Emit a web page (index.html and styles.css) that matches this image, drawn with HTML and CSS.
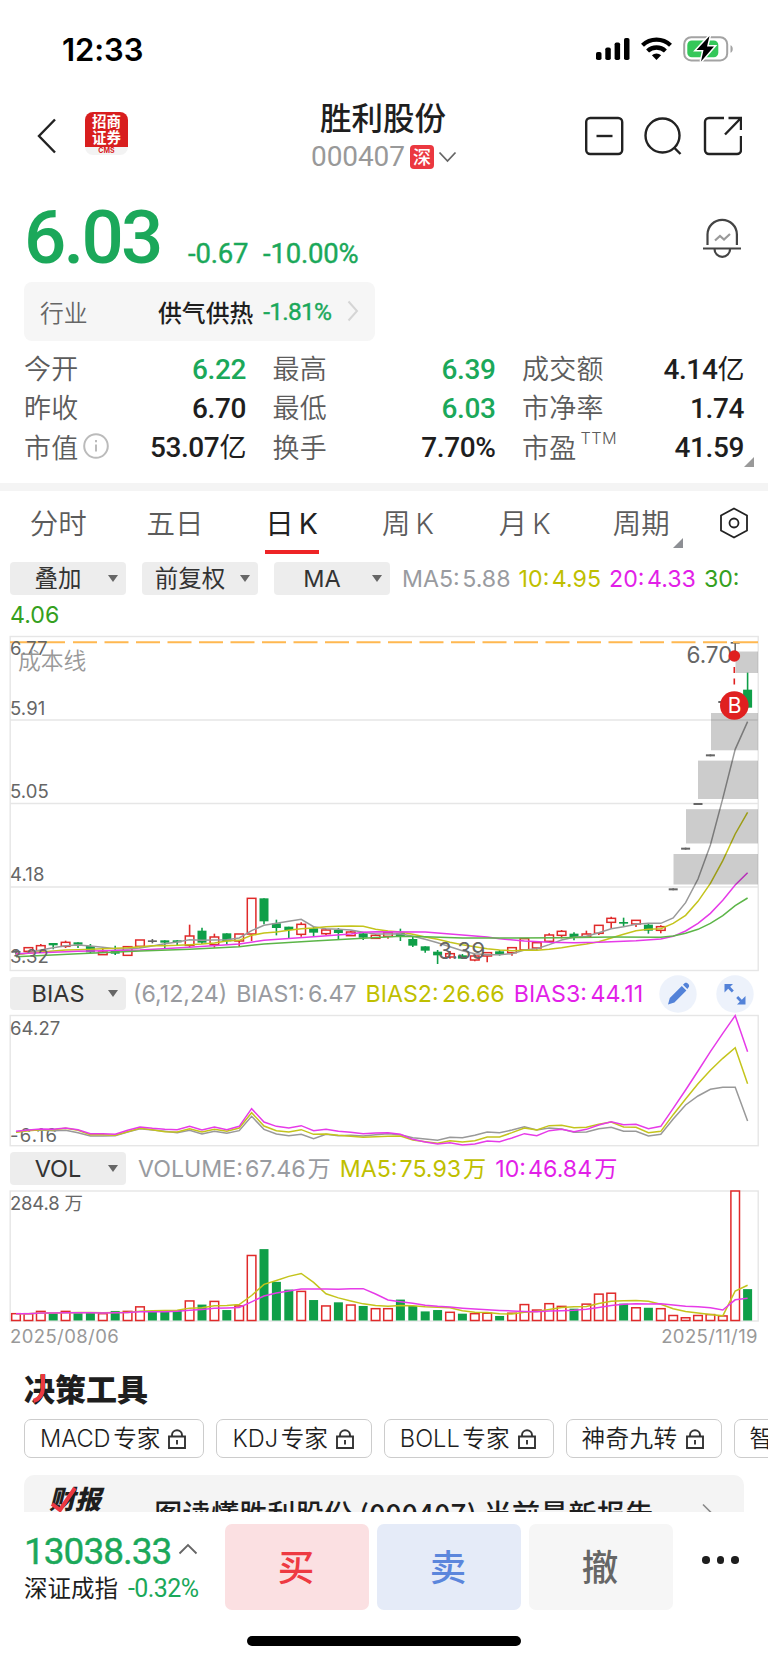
FILE: index.html
```html
<!DOCTYPE html>
<html lang="zh-CN">
<head>
    <meta charset="UTF-8">
    <meta name="viewport" content="width=device-width, initial-scale=1.0">
    <title>胜利股份 000407</title>
    <link rel="stylesheet" href="styles.css">
</head>
<body>
    <div class="status-bar">
        <span class="clock">12:33</span>
        <svg class="status-icons" width="140" height="28" viewBox="0 0 140 28">
            <rect x="1" y="17" width="5.5" height="8" rx="1.8"/>
            <rect x="10.3" y="12.5" width="5.5" height="12.5" rx="1.8"/>
            <rect x="19.6" y="7.5" width="5.5" height="17.5" rx="1.8"/>
            <rect x="29" y="3" width="5.5" height="22" rx="1.8"/>
            <g fill="none" stroke="#000" stroke-width="4.3">
                <path d="M47.5 10.2a20.5 20.5 0 0 1 28 0"/>
                <path d="M52.6 16a13 13 0 0 1 17.8 0"/>
            </g>
            <path d="M61.5 25l-4.6-4.7a6.6 6.6 0 0 1 9.2 0z"/>
            <rect x="89.2" y="2.2" width="43" height="23.2" rx="7" fill="none" stroke="#a3a3a3" stroke-width="2"/>
            <path d="M135.5 10.2c3 1.2 3 6.4 0 7.6z" fill="#a3a3a3"/>
            <rect x="92.3" y="5.4" width="31" height="16.8" rx="4.5" fill="#34c759"/>
            <path d="M114.5 1l-13 14h7l-2.5 11.5 13-15h-7z" stroke="#fff" stroke-width="3" paint-order="stroke"/>
        </svg>
    </div>

    <div class="header">
        <svg class="back" width="22" height="38" viewBox="0 0 22 38"><path d="M19 2.5L3 19l16 16.5"/></svg>
        <div class="logo">
            <div class="logo-name">招商<br>证券</div>
            <div class="logo-sub">CMS</div>
        </div>
        <div class="title">
            <div class="name">胜利股份</div>
            <div class="code">000407<span class="market">深</span><svg width="20" height="12" viewBox="0 0 20 12"><path d="M1.5 1.5l8 8.5 8-8.5"/></svg></div>
        </div>
        <svg class="tools" width="160" height="42" viewBox="0 0 160 42">
            <rect x="4.2" y="3" width="36" height="36" rx="4"/>
            <path d="M14.5 21h16"/>
            <circle cx="80.5" cy="20.5" r="17"/>
            <path d="M92 32.5l6.5 6.5"/>
            <path d="M142 3h-15a4 4 0 0 0-4 4v28a4 4 0 0 0 4 4h28a4 4 0 0 0 4-4V21M143 19.5L159 3M146.5 3H159v12"/>
        </svg>
    </div>

    <div class="quote">
        <span class="price">6.03</span>
        <span class="change">-0.67</span>
        <span class="change percent">-10.00%</span>
        <svg class="bell" width="42" height="44" viewBox="0 0 42 44">
            <path d="M6.5 28V17.5a14.7 14.7 0 0 1 29.4 0V28M2 31.500h38M13.5 32a7.8 7.8 0 0 0 15.6 0"/>
            <path class="trend" d="M14 23.5l5-4.5 4 3.5 6-5.5"/>
        </svg>
    </div>

    <div class="industry">
        <span class="industry-label">行业</span>
        <span class="industry-name">供气供热</span>
        <span class="industry-change">-1.81%</span>
        <svg width="12" height="22" viewBox="0 0 12 22"><path d="M1.5 1.5l8.5 9.5-8.5 9.5"/></svg>
    </div>

    <div class="stats">
        <div class="stat"><span>今开</span><b class="down">6.22</b></div>
        <div class="stat"><span>最高</span><b class="down">6.39</b></div>
        <div class="stat"><span>成交额</span><b>4.14<i>亿</i></b></div>
        <div class="stat"><span>昨收</span><b>6.70</b></div>
        <div class="stat"><span>最低</span><b class="down">6.03</b></div>
        <div class="stat"><span>市净率</span><b>1.74</b></div>
        <div class="stat"><span>市值</span><svg class="info" width="26" height="26" viewBox="0 0 26 26"><circle cx="13" cy="13" r="11.8"/><path d="M13 11.5v7M13 7v2.2"/></svg><b>53.07<i>亿</i></b></div>
        <div class="stat"><span>换手</span><b>7.70%</b></div>
        <div class="stat corner"><span>市盈</span><sup>TTM</sup><b>41.59</b></div>
    </div>

    <div class="tabs">
        <div class="tab">分时</div>
        <div class="tab">五日</div>
        <div class="tab active">日 K</div>
        <div class="tab">周 K</div>
        <div class="tab">月 K</div>
        <div class="tab more">周期</div>
        <svg class="settings" width="30" height="32" viewBox="0 0 30 32"><path d="M15 1.5l13 7v15l-13 7-13-7v-15z"/><circle cx="15" cy="16" r="4.5"/></svg>
    </div>

    <div class="toolbar main-toolbar">
        <div class="select">叠加</div>
        <div class="select">前复权</div>
        <div class="select">MA</div>
        <div class="legend">
            <span class="c-gray">MA5: 5.88</span>
            <span class="c-yellow">10: 4.95</span>
            <span class="c-pink">20: 4.33</span>
            <span class="c-green">30:</span>
        </div>
    </div>
    <div class="legend-wrap c-green">4.06</div>

    <svg id="kline" class="chart" width="768" height="338" viewBox="0 634 768 338"></svg>

    <div class="toolbar bias-toolbar">
        <div class="select">BIAS</div>
        <div class="legend">
            <span class="c-gray">(6,12,24)</span>
            <span class="c-gray">BIAS1: 6.47</span>
            <span class="c-yellow">BIAS2: 26.66</span>
            <span class="c-pink">BIAS3: 44.11</span>
        </div>
        <div class="round-buttons">
            <svg width="38" height="38" viewBox="0 0 38 38">
                <circle cx="19" cy="19" r="18.7"/>
                <path d="M9 29.5l1.8-6.5 12-12 4.6 4.6-12 12zM24 9.8l1.8-1.7c2-1.5 5.5 1.8 4 4l-1.5 2z"/>
            </svg>
            <svg width="38" height="38" viewBox="0 0 38 38">
                <circle cx="19" cy="19" r="18.7"/>
                <path d="M8.500 9h8.5l-2.8 2.8 3.6 3.6-2 2-3.6-3.6L8.5 17.5zM29.5 29.5h-8.5l2.8-2.8-3.6-3.6 2-2 3.6 3.6 3.7-3.7z"/>
            </svg>
        </div>
    </div>

    <svg id="bias" class="chart" width="768" height="134" viewBox="0 1014 768 134"></svg>

    <div class="toolbar vol-toolbar">
        <div class="select">VOL</div>
        <div class="legend">
            <span class="c-gray">VOLUME: 67.46 万</span>
            <span class="c-yellow">MA5: 75.93 万</span>
            <span class="c-pink">10: 46.84 万</span>
        </div>
    </div>

    <svg id="vol" class="chart" width="768" height="133" viewBox="0 1190 768 133"></svg>
    <div class="dates"><span>2025/08/06</span><span>2025/11/19</span></div>

    <div class="section-title">决策工具
        <svg class="stroke" width="24" height="32" viewBox="0 0 24 32"><path d="M16 1v13c0 7-3 12-9.5 14"/></svg>
    </div>

    <div class="chips">
        <div class="chip">MACD 专家<svg class="lock" width="18" height="20" viewBox="0 0 18 20"><path d="M1 7.5h16V19H1zM4 7V6a5 4.8 0 0 1 10 0v1M9 11v4.5"/></svg></div>
        <div class="chip">KDJ 专家<svg class="lock" width="18" height="20" viewBox="0 0 18 20"><path d="M1 7.5h16V19H1zM4 7V6a5 4.8 0 0 1 10 0v1M9 11v4.5"/></svg></div>
        <div class="chip">BOLL 专家<svg class="lock" width="18" height="20" viewBox="0 0 18 20"><path d="M1 7.5h16V19H1zM4 7V6a5 4.8 0 0 1 10 0v1M9 11v4.5"/></svg></div>
        <div class="chip wide">神奇九转<svg class="lock" width="18" height="20" viewBox="0 0 18 20"><path d="M1 7.5h16V19H1zM4 7V6a5 4.8 0 0 1 10 0v1M9 11v4.5"/></svg></div>
        <div class="chip">智</div>
    </div>

    <div class="report-clip">
        <div class="report">
            <div class="report-logo">财报
                <svg class="stroke" width="32" height="28" viewBox="0 0 32 28"><path d="M3 19l8 6 15-22"/></svg>
            </div>
            <div class="report-text">一图读懂胜利股份 (000407) 当前最新报告</div>
            <svg class="report-arrow" width="12" height="22" viewBox="0 0 12 22"><path d="M1 1.5L10.5 11 1 20.5"/></svg>
        </div>
    </div>

    <div class="bottom-bar">
        <div class="index">
            <div class="index-value">13038.33<svg width="20" height="12" viewBox="0 0 20 12"><path d="M1.5 10.5L10 2l8.5 8.5"/></svg></div>
            <div class="index-name">深证成指<span>-0.32%</span></div>
        </div>
        <div class="action buy">买</div>
        <div class="action sell">卖</div>
        <div class="action cancel">撤</div>
        <div class="dots"><i></i><i></i><i></i></div>
    </div>
    <div class="home-indicator"></div>

    <script src="chart.js"></script>
</body>
</html>
```
FILE: styles.css
```css
* {
    box-sizing: border-box;
}

body {
    margin: 0;
    width: 768px;
    height: 1663px;
    overflow: hidden;
    background: #fff;
    color: #1e1e1e;
    font-family: Inter, "Noto Sans CJK SC", sans-serif;
}

svg {
    display: block;
    flex: none;
    fill: none;
}

/* status bar */
.status-bar {
    display: flex;
    justify-content: space-between;
    align-items: center;
    height: 98px;
    padding: 0 33px 0 62px;
}

.clock {
    font-size: 31px;
    font-weight: 600;
    letter-spacing: -0.1px;
    color: #000;
}

.status-icons {
    fill: #000;
}

/* header */
.header {
    display: flex;
    height: 92px;
    padding: 0 26px 0 36px;
}

.back {
    margin-top: 19px;
    stroke: #222;
    stroke-width: 2.4;
}

.logo {
    width: 43px;
    height: 43px;
    margin: 14px 0 0 27px;
    border-radius: 8px;
    background: linear-gradient(#d81e1e 35px, #f3f3f3 35px);
    overflow: hidden;
    text-align: center;
}

.logo-name {
    height: 35px;
    padding-top: 1px;
    font: 700 14.5px/16px "Noto Sans CJK SC", sans-serif;
    color: #fff;
}

.logo-sub {
    font: 700 7px/8px Inter, sans-serif;
    color: #d81e1e;
}

.title {
    width: 200px;
    margin: 0 auto 0 155px;
    text-align: center;
}

.name {
    height: 41px;
    font: 500 31.5px/36px "Noto Sans CJK SC", sans-serif;
}

.code {
    display: flex;
    justify-content: center;
    align-items: center;
    height: 35px;
    padding-left: 3px;
    font: 400 28px/35px Roboto, sans-serif;
    letter-spacing: -0.1px;
    color: #999;
}

.code svg {
    stroke: #666;
    stroke-width: 1.8;
}

.market {
    width: 24px;
    height: 24px;
    margin: 0 4px 0 5px;
    border-radius: 4px;
    background: #eb3840;
    font: 500 18px/23px "Noto Sans CJK SC", sans-serif;
    color: #fff;
}

.tools {
    margin-top: 17px;
    stroke: #222;
    stroke-width: 2.4;
}

/* price */
.quote {
    display: flex;
    align-items: baseline;
    height: 92px;
    padding: 4px 24px 0 24px;
    color: #1ba85a;
    font-family: Roboto, sans-serif;
    font-weight: 500;
}

.price {
    width: 164px;
    font-size: 74.5px;
    line-height: 88px;
    letter-spacing: -2.8px;
}

.change {
    width: 75px;
    font-size: 27.5px;
    font-weight: 400;
    -webkit-text-stroke: 0.4px;
    letter-spacing: -0.2px;
}

.percent {
    width: auto;
}

.bell {
    margin: 23px 1px 0 auto;
    align-self: flex-start;
    stroke: #444;
    stroke-width: 2.2;
}

.bell .trend {
    stroke: #999;
}

.industry {
    display: flex;
    align-items: center;
    width: 351px;
    height: 59px;
    margin-left: 24px;
    padding: 0 16px 1px;
    border-radius: 8px;
    background: #f6f6f6;
    font-family: "Noto Sans CJK SC", sans-serif;
    font-size: 23.8px;
}

.industry-label {
    width: 120px;
    color: #666;
    font-weight: 350;
}

.industry-name {
    width: 107px;
    font-weight: 500;
}

.industry-change {
    width: 84px;
    color: #1ba85a;
    font: 400 24.5px Roboto, sans-serif;
    -webkit-text-stroke: 0.4px;
    letter-spacing: -0.8px;
}

.industry svg {
    margin-left: 1px;
    stroke: #d5d5d5;
    stroke-width: 2;
}

.stats {
    display: grid;
    grid-template-columns: 222px 223px 222px;
    grid-auto-rows: 39.3px;
    column-gap: 26.5px;
    height: 142px;
    padding: 7px 24px 0;
}

.stat {
    display: flex;
    align-items: center;
    position: relative;
    font: 350 27px/37px "Noto Sans CJK SC", sans-serif;
    letter-spacing: 0.3px;
    color: #5c5c5c;
}

.stat b {
    margin: 3px 0 0 auto;
    font: 500 28px/37px Roboto, "Noto Sans CJK SC", sans-serif;
    letter-spacing: -0.4px;
    color: #1e1e1e;
}

.stat b.down {
    color: #1ba85a;
}

.stat i {
    font-style: normal;
    font-weight: 400;
    font-size: 27px;
    line-height: 1;
}

.stat sup {
    margin: -17px 0 0 4px;
    font: 300 16.3px Inter, sans-serif;
}

.info {
    margin-left: 4px;
    stroke: #bbb;
    stroke-width: 2;
}

.corner::after {
    content: "";
    position: absolute;
    right: -10px;
    bottom: -1px;
    border-left: 10px solid transparent;
    border-bottom: 10px solid #999;
}

/* period tabs */
.tabs {
    display: flex;
    height: 79px;
    border-top: 8px solid #f4f4f4;
}

.tab {
    position: relative;
    width: 116.6px;
    height: 63px;
    font: 350 28.5px/66px Inter, "Noto Sans CJK SC", sans-serif;
    word-spacing: -3px;
    text-align: center;
    color: #5c5c5c;
}

.tab.active {
    color: #222;
    font-weight: 400;
}

.tab.active::after {
    content: "";
    position: absolute;
    left: 32px;
    bottom: 0;
    width: 54px;
    height: 4px;
    background: #ee2426;
}

.tab.more::after {
    content: "";
    position: absolute;
    right: 17px;
    bottom: 6px;
    border-left: 10px solid transparent;
    border-bottom: 10px solid #8d8f94;
}

.settings {
    margin: 16px 0 0 19px;
    stroke: #222;
    stroke-width: 1.8;
}

/* chart toolbars */
.toolbar {
    display: flex;
    gap: 16px;
    height: 33px;
    padding: 0 10px;
}

.select {
    position: relative;
    flex: none;
    width: 116px;
    height: 33px;
    padding-right: 20px;
    border-radius: 4px;
    background: #ededed;
    font: 400 23.5px/34px Inter, "Noto Sans CJK SC", sans-serif;
    text-align: center;
    color: #333;
}

.select::after {
    content: "";
    position: absolute;
    right: 8px;
    top: 13px;
    border: 5px solid transparent;
    border-top: 7px solid #666;
    border-bottom: 0;
}

.legend {
    display: flex;
    flex: none;
    gap: 8px;
    font: 400 23.2px/34px Inter, "Noto Sans CJK SC", sans-serif;
    word-spacing: -4px;
    white-space: nowrap;
}

.main-toolbar .legend {
    margin-left: -4px;
}

.legend-wrap {
    height: 39px;
    padding: 3px 0 0 10px;
    font: 400 23.2px/34px Inter, sans-serif;
}

.c-gray {
    color: #999ba0;
}

.c-yellow {
    color: #bfbf00;
}

.c-pink {
    color: #e21fe8;
}

.c-green {
    color: #35a020;
}

.bias-toolbar {
    height: 42px;
    padding-top: 5px;
}

.bias-toolbar .legend {
    gap: 9px;
    margin-left: -9px;
    word-spacing: -3px;
}

.round-buttons {
    display: flex;
    gap: 19px;
    margin: -2px 6px 0 auto;
}

.round-buttons circle {
    fill: #edf2fb;
}

.round-buttons path {
    fill: #5382d8;
}

.vol-toolbar {
    height: 42px;
    padding-top: 4px;
}

.vol-toolbar .legend {
    gap: 9px;
    margin-left: -4px;
    word-spacing: -4.5px;
}

/* charts */
.chart text {
    font-family: Inter, "Noto Sans CJK SC", sans-serif;
    font-weight: 400;
    fill: #666;
}

.chart .axis {
    font-size: 18.5px;
    letter-spacing: 0.1px;
}

.chart .mark {
    font-size: 22.5px;
}

.chart .cost {
    font-size: 22.8px;
    font-weight: 350;
    fill: #999;
}

.chart .buy-mark {
    font-size: 21px;
    fill: #fff;
}

.frame {
    stroke: #e6e6e6;
    stroke-width: 1.4;
}

.dates {
    display: flex;
    justify-content: space-between;
    height: 43px;
    padding: 2px 10px 0 10px;
    font: 400 18.5px/23px Inter, sans-serif;
    letter-spacing: 0.4px;
    color: #999;
}

/* decision tools */
.section-title {
    position: relative;
    height: 53px;
    padding-left: 24px;
    font: 900 31px/43px "Noto Sans CJK SC", sans-serif;
}

.section-title .stroke {
    position: absolute;
    left: 27px;
    top: 7px;
    stroke: #eb3840;
    stroke-width: 4;
}

.chips {
    display: flex;
    gap: 12px;
    height: 56px;
    padding-left: 24px;
    overflow: hidden;
}

.chip {
    display: flex;
    flex: none;
    align-items: center;
    height: 39px;
    padding: 1px 17px 0 15px;
    border: 1px solid #ccc;
    border-radius: 7px;
    font: 350 23.6px/36px Inter, "Noto Sans CJK SC", sans-serif;
    word-spacing: -4px;
    white-space: nowrap;
}

.chip.wide {
    letter-spacing: 0.4px;
}

.lock {
    margin: -1px 0 0 8px;
    stroke: #333;
    stroke-width: 1.9;
}

.report-clip {
    height: 37px;
    padding: 0 24px;
    overflow: hidden;
}

.report {
    display: flex;
    height: 78px;
    border-radius: 10px;
    background: #f4f4f4;
}

.report-logo {
    position: relative;
    width: 102px;
    padding: 7px 0 0 25px;
    font: italic 900 26px/32px "Noto Sans CJK SC", sans-serif;
}

.report-logo .stroke {
    position: absolute;
    left: 25px;
    top: 10px;
    stroke: #eb3840;
    stroke-width: 4;
}

.report-text {
    font: 500 28px/76px "Noto Sans CJK SC", sans-serif;
    letter-spacing: 0.3px;
    white-space: nowrap;
}

.report-arrow {
    margin: 28px 30px 0 auto;
    stroke: #888;
    stroke-width: 1.6;
}

/* bottom bar */
.bottom-bar {
    display: flex;
    gap: 8px;
    height: 124px;
    padding: 12px 0 0 24px;
}

.index {
    width: 193px;
}

.index-value {
    display: flex;
    align-items: center;
    gap: 7px;
    height: 50px;
    padding-top: 5px;
    font: 400 37px/50px Roboto, sans-serif;
    -webkit-text-stroke: 0.4px;
    letter-spacing: -1px;
    color: #1ba85a;
}

.index-value svg {
    margin-top: -6px;
    stroke: #666;
    stroke-width: 1.8;
}

.index-name {
    height: 30px;
    font: 400 23.5px/26px "Noto Sans CJK SC", sans-serif;
}

.index-name span {
    margin-left: 10px;
    font: 400 25px/26px Roboto, sans-serif;
    letter-spacing: -0.6px;
    color: #1ba85a;
}

.action {
    width: 144px;
    height: 86px;
    padding-right: 2px;
    border-radius: 7px;
    font: 500 36.5px/83px "Noto Sans CJK SC", sans-serif;
    text-align: center;
}

.buy {
    background: #fbe0e2;
    color: #ee3a42;
}

.sell {
    background: #e5ebf8;
    color: #5b86dc;
}

.cancel {
    background: #f6f6f6;
    color: #666;
}

.dots {
    display: flex;
    gap: 7px;
    padding: 32px 0 0 21px;
}

.dots i {
    width: 7.5px;
    height: 7.5px;
    border-radius: 50%;
    background: #1e1e1e;
}

.home-indicator {
    width: 274px;
    height: 10px;
    margin-left: 247px;
    border-radius: 5px;
    background: #000;
}
```
FILE: chart.js
```js
const RED = '#e02a2a';
const GREEN = '#0f9f48';
const GRAY = '#999';
const YELLOW = '#c4c41c';
const PINK = '#e63be8';
const LIME = '#5cb548';

// x of the candle centre, 60 days in the window
const cx = i => 16 + i * 12.4;

function frame(top, bottom) {
    return `<rect class="frame" x="10.2" y="${top}" width="748" height="${bottom - top}"/>`;
}

function line(points, color) {
    return `<polyline points="${points.map(p => p.join(',')).join(' ')}" stroke="${color}" stroke-width="1.5"/>`;
}

function bar(i, top, bottom, type) {
    if (type === 'r') {
        return `<rect x="${cx(i) - 4.3}" y="${top}" width="8.6" height="${Math.max(bottom - top, 1)}" fill="#fff" stroke="${RED}" stroke-width="1.5"/>`;
    }
    return `<rect x="${cx(i) - 4.5}" y="${top}" width="9" height="${Math.max(bottom - top, 1.5)}" fill="${type === 'g' ? GREEN : '#666'}"/>`;
}

// ---- K line: [type, body top, body bottom, high, low], three units per pixel
const base = 860;
const ky = v => base + v / 3;
const candles = [
    ['k', 273, 278, 268, 284], ['r', 263, 274, 263, 280], ['r', 257, 272, 252, 275], ['g', 249, 256, 249, 268],
    ['r', 247, 259, 242, 264], ['g', 247, 254, 247, 264], ['g', 258, 277, 252, 279], ['r', 276, 284, 266, 284],
    ['g', 272, 281, 257, 285], ['r', 260, 286, 260, 286], ['r', 240, 259, 240, 263], ['k', 241, 246, 237, 250],
    ['g', 241, 248, 241, 265], ['g', 241, 247, 241, 255], ['r', 228, 256, 194, 263], ['g', 212, 248, 203, 252],
    ['r', 231, 254, 221, 263], ['g', 220, 244, 220, 252], ['r', 222, 243, 222, 260], ['r', 115, 222, 115, 243],
    ['g', 115, 184, 115, 193], ['g', 190, 204, 179, 226], ['g', 200, 210, 200, 234], ['r', 193, 223, 187, 230],
    ['g', 205, 218, 199, 228], ['r', 210, 221, 207, 225], ['g', 210, 219, 204, 240], ['r', 216, 227, 212, 227],
    ['g', 220, 233, 220, 240], ['r', 226, 235, 222, 235], ['r', 218, 229, 218, 236], ['g', 219, 230, 206, 243],
    ['g', 237, 257, 231, 261], ['g', 259, 272, 259, 278], ['g', 275, 286, 270, 312], ['r', 281, 291, 273, 296],
    ['g', 286, 296, 282, 296], ['r', 288, 300, 283, 304], ['r', 278, 288, 278, 307], ['g', 274, 282, 270, 287],
    ['r', 263, 278, 263, 287], ['r', 236, 270, 236, 270], ['r', 248, 264, 248, 269], ['r', 225, 244, 220, 247],
    ['r', 214, 226, 210, 235], ['g', 221, 232, 217, 241], ['r', 222, 231, 212, 234], ['r', 196, 220, 196, 225],
    ['r', 175, 187, 170, 206], ['g', 186, 191, 173, 200], ['r', 181, 192, 181, 201], ['g', 194, 212, 191, 221],
    ['r', 200, 211, 196, 220], ['k', 85, 91, 85, 91], ['k', -37, -31, -37, -31], ['k', -171, -165, -171, -165],
    ['k', -317, -311, -317, -311], ['k', -477, -471, -477, -471], ['k', -654, -649, -654, -600], ['g', -511, -457, -562, -457]
];
const ma5 = [285, 278, 270, 263, 257, 255, 258, 262, 266, 267, 264, 258, 251, 246, 239, 241, 240, 239, 234, 212,
    196, 190, 184, 178, 200, 206, 208, 210, 217, 222, 222, 221, 229, 238, 248, 260, 272, 281, 284, 284,
    281, 270, 266, 254, 240, 232, 229, 218, 206, 200, 193, 190, 190, 174, 128, 57, -45, -185, -332, -415];
const ma10 = [283, 280, 276, 273, 270, 269, 268, 266, 265, 263, 260, 257, 257, 256, 254, 252, 249, 243, 241, 226,
    219, 216, 211, 206, 204, 200, 199, 198, 199, 208, 213, 216, 223, 231, 238, 247, 254, 260, 266, 270,
    272, 271, 271, 268, 263, 257, 252, 245, 234, 223, 212, 208, 206, 190, 166, 124, 70, 2, -78, -143];
const ma20 = [[0, 281], [5, 274], [10, 270], [14, 262], [18, 252], [20, 241], [24, 230], [27, 222], [28, 217], [29, 215],
    [33, 216], [35, 222], [38, 231], [39, 236], [41, 243], [43, 247], [45, 248], [47, 247], [50, 242], [52, 237],
    [53, 229], [54, 213], [55, 190], [56, 160], [57, 121], [58, 75], [59, 38]];
const ma30 = [[0, 290], [5, 281], [10, 273], [14, 268], [18, 260], [20, 252], [24, 243], [28, 235], [31, 229], [33, 230],
    [36, 234], [40, 234], [44, 233], [48, 231], [52, 232], [53, 228], [54, 220], [55, 208], [56, 190], [57, 167], [58, 137], [59, 114]];
// gaps between sessions: [x, top, bottom]
const gaps = [[735.5, 651.5, 673], [711, 713, 750.3], [698, 760.6, 799], [686, 809.2, 843.5], [673.5, 854, 884.5]];

let k = frame(636.5, 970.5);
[720, 803.5, 887].forEach(y => {
    k += `<path class="frame" d="M10 ${y}H758"/>`;
});
candles.forEach(([type, top, bottom, high, low], i) => {
    const color = type === 'r' ? RED : type === 'g' ? GREEN : '#666';
    k += `<path d="M${cx(i)} ${ky(high)}V${ky(low)}" stroke="${color}" stroke-width="1.6"/>`;
    k += bar(i, ky(top), ky(bottom), type);
});
k += line(ma5.map((v, i) => [cx(i), ky(v)]), GRAY);
k += line(ma10.map((v, i) => [cx(i), ky(v)]), YELLOW);
k += line(ma20.map(([i, v]) => [cx(i), ky(v)]), PINK);
k += line(ma30.map(([i, v]) => [cx(i), ky(v)]), LIME);
gaps.forEach(([x, top, bottom]) => {
    k += `<rect x="${x}" y="${top}" width="${758 - x}" height="${bottom - top}" fill="#000" fill-opacity="0.2"/>`;
});
// cost line
k += '<path d="M73 642.3H728" stroke="#ffb850" stroke-width="2" stroke-dasharray="24 7.5"/>';
k += '<path d="M10 642.3H65M733 642.3H758" stroke="#ffb850" stroke-width="2"/>';
[['6.77', 655], ['5.91', 714.5], ['5.05', 797.5], ['4.18', 880.5], ['3.32', 963]].forEach(([t, y]) => {
    k += `<text class="axis" x="10" y="${y}">${t}</text>`;
});
k += '<text class="cost" x="18" y="668.5">成本线</text>';
k += '<text class="mark" x="686.5" y="662.5">6.70</text>';
k += '<text class="mark" x="438" y="959">3.39</text>';
// buy marker
k += '<path d="M734.3 667V686" stroke="#e02020" stroke-width="1.6" stroke-dasharray="6 5.5"/>';
k += '<circle cx="734.3" cy="656" r="5.8" fill="#e02020"/><circle cx="734.3" cy="705.5" r="14.3" fill="#e02020"/>';
k += '<text class="buy-mark" x="734.5" y="713" text-anchor="middle">B</text>';
document.getElementById('kline').innerHTML = k;

// ---- BIAS
const by = v => 1000 + v / 3;
const bias1 = [396, 391, 390, 392, 391, 398, 408, 408, 407, 396, 386, 390, 394, 398, 391, 402, 394, 400, 392, 349,
    388, 402, 407, 403, 416, 403, 407, 406, 408, 404, 401, 404, 413, 417, 421, 412, 413, 406, 396, 398,
    390, 380, 390, 384, 387, 397, 396, 386, 382, 394, 394, 408, 403, 357, 315, 288, 268, 262, 262, 363];
const bias2 = [397, 392, 389, 389, 385, 391, 404, 404, 406, 395, 385, 389, 395, 396, 386, 396, 388, 394, 384, 338,
    378, 392, 396, 389, 403, 402, 406, 409, 412, 410, 409, 408, 420, 425, 430, 422, 426, 422, 411, 411,
    398, 384, 390, 377, 376, 383, 382, 373, 366, 381, 382, 398, 394, 344, 297, 251, 211, 175, 143, 251];
const bias3 = [394, 390, 387, 388, 384, 389, 401, 401, 403, 391, 381, 385, 388, 389, 379, 390, 381, 389, 379, 326,
    366, 379, 384, 377, 392, 388, 394, 397, 401, 399, 398, 403, 418, 426, 432, 428, 435, 432, 423, 425,
    414, 401, 407, 392, 388, 395, 388, 375, 365, 374, 373, 386, 379, 325, 270, 213, 155, 100, 47, 155];
let b = frame(1015.5, 1145.7);
b += '<text class="axis" x="10" y="1034.5">64.27</text><text class="axis" x="10" y="1142" textLength="47">-6.16</text>';
b += line(bias1.map((v, i) => [cx(i), by(v)]), GRAY);
b += line(bias2.map((v, i) => [cx(i), by(v)]), YELLOW);
b += line(bias3.map((v, i) => [cx(i), by(v)]), PINK);
document.getElementById('bias').innerHTML = b;

// ---- volume, in 万
const maxVolume = 284.8;
const volumes = [15, 15, 20, 16, 20, 16, 17, 15, 21, 20, 30, 20, 20, 23, 43, 35, 42, 23, 32, 143,
    157, 85, 68, 64, 45, 32, 40, 34, 32, 26, 26, 46, 32, 20, 23, 18, 15, 15, 16, 10,
    16, 35, 23, 37, 31, 26, 36, 58, 60, 37, 28, 28, 26, 11, 6, 11, 13, 10, 284.8, 69];
const volumeType = 'rrrgrggrgrrgggrgrgrrgggrgrgrgrrgggg' + 'rgrrgrrrrrgrrrgrgrrrrrrrg';
const vy = v => 1320.5 - v / maxVolume * 129.5;
const average = n => volumes.map((v, i) => {
    const part = volumes.slice(Math.max(0, i - n + 1), i + 1);
    return [cx(i), vy(part.reduce((a, c) => a + c, 0) / part.length)];
});
let v = frame(1191, 1321);
v += '<text class="axis" x="10" y="1209.5" textLength="73">284.8 万</text>';
volumes.forEach((value, i) => {
    v += bar(i, vy(value), 1320.5, volumeType[i]);
});
v += line(average(5), YELLOW);
v += line(average(10), PINK);
document.getElementById('vol').innerHTML = v;
```
